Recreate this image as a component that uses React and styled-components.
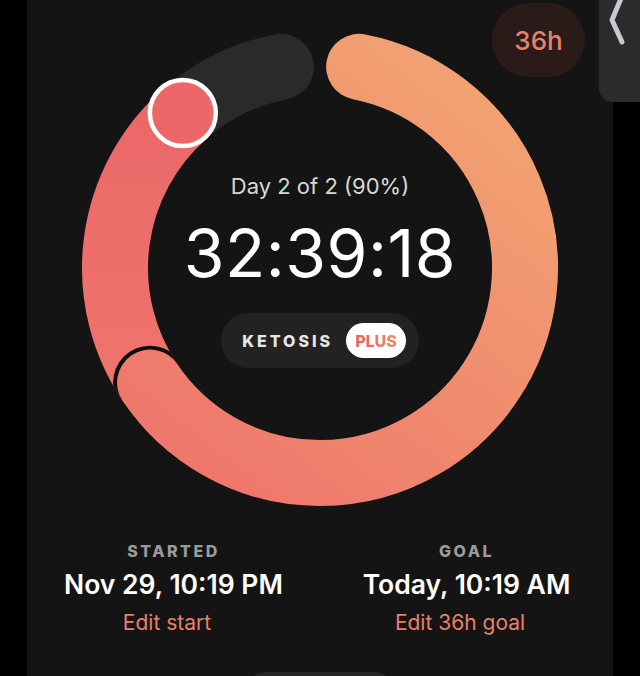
import React from "react";
import styled, { createGlobalStyle } from "styled-components";

const Global = createGlobalStyle`
  html, body { margin: 0; padding: 0; background: #000; overflow: hidden; }
  body { font-family: Inter, "Noto Sans", sans-serif; -webkit-font-smoothing: antialiased; }
`;

const Screen = styled.div`
  position: relative;
  width: 640px;
  height: 676px;
  display: flex;
  justify-content: center;
  background: #000;
  overflow: hidden;
`;

const Panel = styled.main`
  position: relative;
  width: 586px;
  background: #141414;
  display: flex;
  flex-direction: column;
  align-items: center;
  padding-top: 28px;
  box-sizing: border-box;
`;

const SideTab = styled.div`
  position: absolute;
  top: 0;
  right: 0;
  width: 41px;
  height: 102px;
  background: #2b2b2b;
  border-bottom-left-radius: 14px;
`;

const GoalBadge = styled.div`
  position: absolute;
  top: 3px;
  right: 28px;
  width: 93px;
  height: 74px;
  border-radius: 37px;
  background: #2a1b18;
  color: #e9806a;
  font-size: 26px;
  font-weight: 500;
  display: flex;
  align-items: center;
  justify-content: center;
`;

const RingArea = styled.section`
  display: grid;
  width: 480px;
  height: 480px;
  & > * {
    grid-area: 1 / 1;
  }
`;

const RingSvg = styled.svg`
  display: block;
`;

const Center = styled.div`
  align-self: center;
  justify-self: center;
  display: flex;
  flex-direction: column;
  align-items: center;
  padding-top: 4px;
`;

const DayLabel = styled.div`
  color: #d8d8d8;
  font-size: 22px;
  line-height: 28px;
  font-weight: 400;
`;

const Timer = styled.div`
  margin-top: 18px;
  color: #fff;
  font-size: 66px;
  line-height: 70px;
  font-weight: 400;
  letter-spacing: 0.5px;
`;

const StagePill = styled.div`
  margin-top: 25px;
  height: 55px;
  box-sizing: border-box;
  padding: 0 13px 0 21px;
  border-radius: 28px;
  background: #222222;
  display: flex;
  align-items: center;
  gap: 13px;
`;

const StageName = styled.span`
  color: #e6e6e6;
  font-size: 16px;
  font-weight: 800;
  letter-spacing: 3px;
`;

const PlusTag = styled.span`
  height: 35px;
  padding: 0 9px;
  border-radius: 18px;
  background: #fff;
  display: flex;
  align-items: center;
  font-size: 16px;
  font-weight: 800;
  & > span {
    background: linear-gradient(90deg, #ee6256, #f3875f);
    -webkit-background-clip: text;
    background-clip: text;
    color: transparent;
  }
`;

const Info = styled.section`
  margin-top: 33px;
  width: 100%;
  display: grid;
  grid-template-columns: 1fr 1fr;
`;

const InfoCol = styled.div`
  display: flex;
  flex-direction: column;
  align-items: center;
`;

const InfoLabel = styled.div`
  color: #9b9b9b;
  font-size: 16px;
  line-height: 20px;
  font-weight: 800;
  letter-spacing: 2.5px;
`;

const InfoValue = styled.div`
  margin-top: 8px;
  color: #fff;
  font-size: 26.5px;
  line-height: 30px;
  font-weight: 600;
  white-space: nowrap;
`;

const EditLink = styled.div`
  margin-top: 12px;
  color: #e8806a;
  font-size: 21px;
  line-height: 24px;
  font-weight: 400;
  margin-left: ${(p) => p.$shift || 0}px;
`;

const BottomButton = styled.div`
  margin-top: 37px;
  width: 154px;
  height: 48px;
  border-radius: 24px;
  background: #262626;
  flex-shrink: 0;
`;

const CX = 240;
const CY = 240;
const R = 205;
const SW = 66;

const pt = (deg, rad = R) => {
  const r = (deg * Math.PI) / 180;
  return [CX + rad * Math.sin(r), CY - rad * Math.cos(r)];
};

const arc = (a1, a2) => {
  const [x1, y1] = pt(a1);
  const [x2, y2] = pt(a2);
  const large = a2 - a1 > 180 ? 1 : 0;
  return `M ${x1.toFixed(2)} ${y1.toFixed(2)} A ${R} ${R} 0 ${large} 1 ${x2.toFixed(2)} ${y2.toFixed(2)}`;
};

function Ring() {
  const start = 11;
  const dayEnd = 236;
  const now = 318.5;
  const end = 349;
  const [kx, ky] = pt(now, 207);
  const [ex, ey] = pt(dayEnd);
  return (
    <RingSvg width="480" height="480" viewBox="0 0 480 480">
      <defs>
        <linearGradient id="seg1" gradientUnits="userSpaceOnUse" x1="430" y1="20" x2="110" y2="420">
          <stop offset="0" stopColor="#f2a673" />
          <stop offset="0.5" stopColor="#f0906f" />
          <stop offset="1" stopColor="#ef786c" />
        </linearGradient>
        <linearGradient id="seg2" gradientUnits="userSpaceOnUse" x1="0" y1="400" x2="0" y2="80">
          <stop offset="0" stopColor="#f0766d" />
          <stop offset="1" stopColor="#ea6868" />
        </linearGradient>
        <clipPath id="annulus">
          <path
            clipRule="evenodd"
            d={`M ${CX - R - SW / 2} ${CY} a ${R + SW / 2} ${R + SW / 2} 0 1 0 ${2 * (R + SW / 2)} 0 a ${R + SW / 2} ${R + SW / 2} 0 1 0 ${-2 * (R + SW / 2)} 0 Z M ${CX - R + SW / 2} ${CY} a ${R - SW / 2} ${R - SW / 2} 0 1 0 ${2 * (R - SW / 2)} 0 a ${R - SW / 2} ${R - SW / 2} 0 1 0 ${-2 * (R - SW / 2)} 0 Z`}
          />
        </clipPath>
      </defs>
      <path d={arc(now - 5, end)} fill="none" stroke="#2a2a2a" strokeWidth={SW} strokeLinecap="round" />
      <path d={arc(dayEnd, now)} fill="none" stroke="url(#seg2)" strokeWidth={SW} strokeLinecap="round" />
      <circle cx={ex} cy={ey} r={SW / 2 + 4} fill="#0d0d0d" clipPath="url(#annulus)" />
      <path d={arc(start, dayEnd)} fill="none" stroke="url(#seg1)" strokeWidth={SW} strokeLinecap="round" />
      <circle cx={kx} cy={ky} r="33" fill="#ec6868" stroke="#fff" strokeWidth="4.5" />
    </RingSvg>
  );
}

export default function App() {
  return (
    <>
      <Global />
      <Screen>
        <Panel>
          <GoalBadge>36h</GoalBadge>
          <RingArea>
            <Ring />
            <Center>
              <DayLabel>Day 2 of 2 (90%)</DayLabel>
              <Timer>32:39:18</Timer>
              <StagePill>
                <StageName>KETOSIS</StageName>
                <PlusTag>
                  <span>PLUS</span>
                </PlusTag>
              </StagePill>
            </Center>
          </RingArea>
          <Info>
            <InfoCol>
              <InfoLabel>STARTED</InfoLabel>
              <InfoValue>Nov 29, 10:19 PM</InfoValue>
              <EditLink $shift={-13}>Edit start</EditLink>
            </InfoCol>
            <InfoCol>
              <InfoLabel>GOAL</InfoLabel>
              <InfoValue>Today, 10:19 AM</InfoValue>
              <EditLink $shift={-13}>Edit 36h goal</EditLink>
            </InfoCol>
          </Info>
          <BottomButton />
        </Panel>
        <SideTab>
          <svg width="41" height="60" viewBox="0 0 41 60">
            <path d="M23 -4 L13 20 L23 42" fill="none" stroke="#c9c9d1" strokeWidth="5" strokeLinecap="round" strokeLinejoin="round" />
          </svg>
        </SideTab>
      </Screen>
    </>
  );
}
